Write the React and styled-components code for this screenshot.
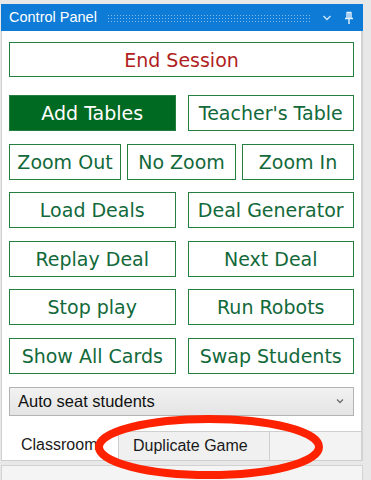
import styled, { createGlobalStyle } from "styled-components";

const GlobalStyle = createGlobalStyle`
  html, body {
    margin: 0;
    padding: 0;
    background: #e8e8e8;
  }
  body {
    width: 371px;
    height: 480px;
    overflow: hidden;
    font-family: "Liberation Sans", Arial, sans-serif;
  }
`;

const Window = styled.div`
  position: relative;
  width: 371px;
  height: 480px;
  box-sizing: border-box;
  padding: 4px 0 0 1px;
  display: flex;
  flex-direction: column;
`;

const Dock = styled.div`
  width: 362px;
  display: flex;
  flex-direction: column;
  flex: 1;
`;

const TitleBar = styled.div`
  height: 27px;
  background: #0e7bd6;
  display: flex;
  align-items: center;
  padding: 0 9px 0 8px;
  color: #fff;
  font-size: 14.5px;
`;

const Title = styled.span`
  margin-right: 10px;
  line-height: 1;
`;

const Grip = styled.div`
  flex: 1;
  height: 8px;
  background-image: radial-gradient(rgba(150, 200, 245, 0.85) 0.6px, transparent 0.9px);
  background-size: 3px 3px;
  margin-right: 12px;
`;

const TitleIcon = styled.svg`
  display: block;
  margin-left: ${(p) => p.$gap || 0}px;
`;

const Panel = styled.div`
  background: #fff;
  border-left: 1px solid #cfcfcf;
  border-right: 2px solid #d2d2d2;
  padding: 11px 7px 15px 7px;
  display: flex;
  flex-direction: column;
`;

const Stack = styled.div`
  display: grid;
  row-gap: 12.6px;
  margin-top: 18px;
`;

const Row = styled.div`
  display: grid;
  grid-template-columns: ${(p) => p.$cols || "1fr 1fr"};
  column-gap: ${(p) => p.$gap ?? 12}px;
`;

const Button = styled.button`
  height: ${(p) => p.$h || 36}px;
  box-sizing: border-box;
  margin: 0;
  padding: 0;
  border: 1px solid #25803f;
  background: ${(p) => (p.$active ? "#016a22" : "#fff")};
  color: ${(p) => (p.$danger ? "#b01e22" : p.$active ? "#fff" : "#12693a")};
  font-family: "DejaVu Sans", Verdana, sans-serif;
  font-size: 19px;
  white-space: nowrap;
  cursor: pointer;
`;

const Select = styled.div`
  height: 29px;
  box-sizing: border-box;
  border: 1px solid #b3b3b3;
  background: linear-gradient(#f2f2f2, #e4e4e4);
  display: flex;
  align-items: center;
  justify-content: space-between;
  padding: 0 9px 0 8px;
  font-size: 16.5px;
  color: #111;
`;

const TabStrip = styled.div`
  height: 29px;
  display: flex;
  background: #f3f3f3;
  border-left: 1px solid #cfcfcf;
  border-right: 2px solid #d2d2d2;
  border-bottom: 1px solid #cfcfcf;
`;

const Tab = styled.div`
  display: flex;
  align-items: center;
  box-sizing: border-box;
  width: ${(p) => p.$w}px;
  padding-left: ${(p) => p.$pad}px;
  font-size: 16px;
  color: #1a1a1a;
  background: ${(p) => (p.$selected ? "#fff" : "#f0f0f0")};
  border-top: ${(p) => (p.$selected ? "none" : "1px solid #cfcfcf")};
  border-left: ${(p) => (p.$selected ? "none" : "1px solid #cfcfcf")};
  border-right: ${(p) => (p.$selected ? "none" : "1px solid #cfcfcf")};
`;

const TabFiller = styled.div`
  flex: 1;
  border-top: 1px solid #cfcfcf;
`;

const BottomPane = styled.div`
  margin-top: 4px;
  flex: 1;
  background: #f4f4f4;
  border: 1px solid #d2d2d2;
  border-bottom: none;
`;

const Highlight = styled.svg`
  position: absolute;
  left: 91px;
  top: 413px;
  pointer-events: none;
`;

export default function App() {
  return (
    <Window>
      <GlobalStyle />
      <Dock>
        <TitleBar>
          <Title>Control Panel</Title>
          <Grip />
          <TitleIcon width="10" height="8" viewBox="0 0 10 8">
            <path d="M1.5 2 L5 5.5 L8.5 2" fill="none" stroke="#cfe6fb" strokeWidth="1.4" />
          </TitleIcon>
          <TitleIcon $gap={12} width="10" height="14" viewBox="0 0 10 14">
            <path
              d="M2.5 1.5 H7.5 M3 1.5 V7.5 M7 1.5 V7.5 M5 1.5 V7.5 M1 7.5 H9 M5 7.5 V13"
              fill="none"
              stroke="#e6f2fd"
              strokeWidth="1.4"
            />
          </TitleIcon>
        </TitleBar>
        <Panel>
          <Button $h={35} $danger>End Session</Button>
          <Stack>
            <Row>
              <Button $active>Add Tables</Button>
              <Button>Teacher's Table</Button>
            </Row>
            <Row $cols="112px 109px 1fr" $gap={6}>
              <Button>Zoom Out</Button>
              <Button>No Zoom</Button>
              <Button>Zoom In</Button>
            </Row>
            <Row>
              <Button>Load Deals</Button>
              <Button>Deal Generator</Button>
            </Row>
            <Row>
              <Button>Replay Deal</Button>
              <Button>Next Deal</Button>
            </Row>
            <Row>
              <Button>Stop play</Button>
              <Button>Run Robots</Button>
            </Row>
            <Row>
              <Button>Show All Cards</Button>
              <Button>Swap Students</Button>
            </Row>
            <Select>
              <span>Auto seat students</span>
              <svg width="8" height="6" viewBox="0 0 8 6">
                <path d="M1 1.5 L4 4.5 L7 1.5" fill="none" stroke="#6d6d6d" strokeWidth="1.3" />
              </svg>
            </Select>
          </Stack>
        </Panel>
        <TabStrip>
          <Tab $selected $w={116} $pad={19}>Classroom</Tab>
          <Tab $w={152} $pad={14}>Duplicate Game</Tab>
          <TabFiller />
        </TabStrip>
        <BottomPane />
      </Dock>
      <Highlight width="238" height="68" viewBox="0 0 238 68">
        <ellipse cx="118" cy="34" rx="110" ry="28" fill="none" stroke="#ff2200" strokeWidth="8" />
      </Highlight>
    </Window>
  );
}
